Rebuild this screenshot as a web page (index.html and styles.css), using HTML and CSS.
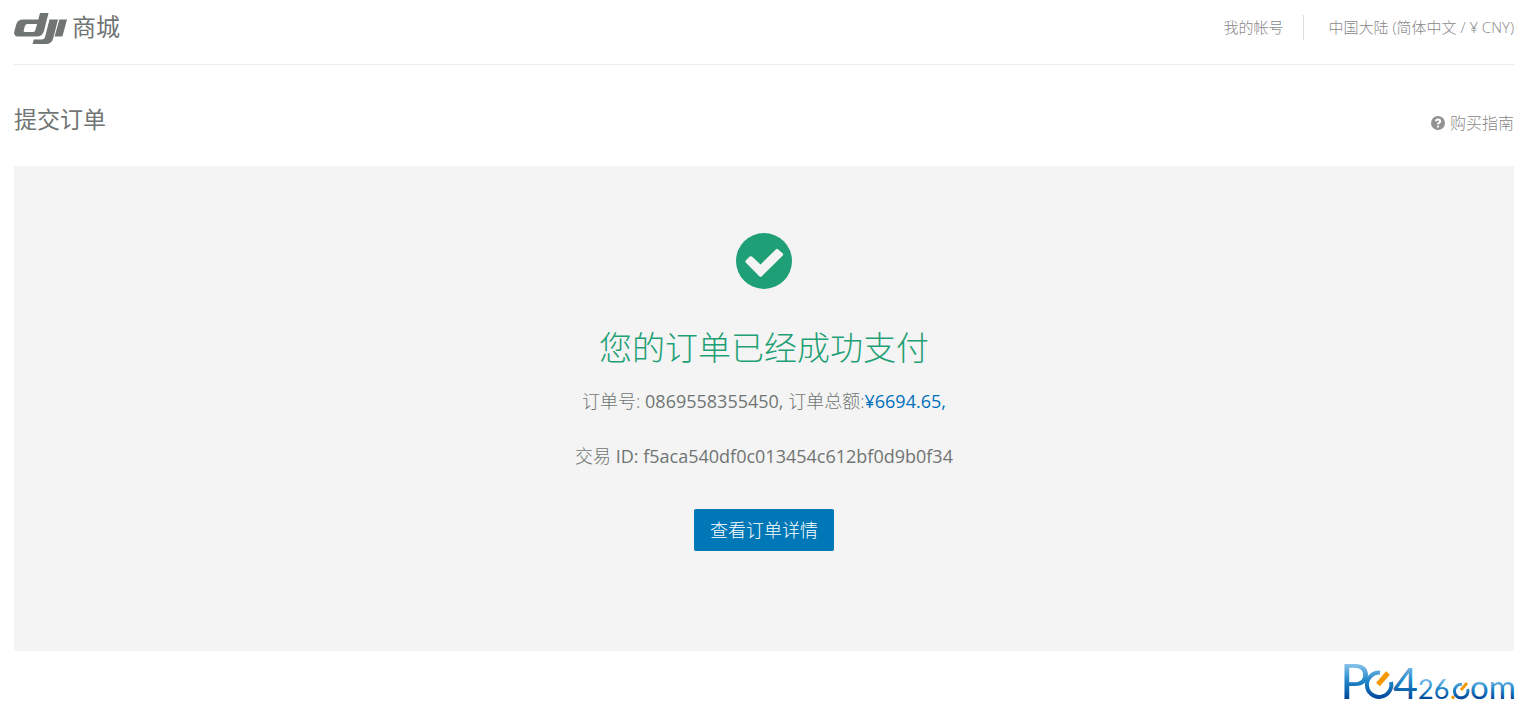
FILE: index.html
```html
<!DOCTYPE html>
<html lang="zh-CN">
<head>
<meta charset="utf-8">
<title>提交订单 - DJI 商城</title>
<meta name="viewport" content="width=device-width, initial-scale=1">
<link rel="stylesheet" href="styles.css">
</head>
<body>
<header class="topbar">
  <a class="brand" href="#">
    <svg class="brand-mark" viewBox="0 0 54 32" role="img" aria-label="DJI">
      <path fill-rule="evenodd" d="M26 0H34.500L30 18Q28.500 23.500 22.500 23.500H5Q-1 23.500 .4 18L2.400 11Q3.800 6.500 9 6.500H24.300ZM23.100 11H13.500Q11.500 11 11 12.800L9.700 17.500Q9.300 19 11 19H19Q20.700 19 21.200 17.500Z"/>
      <path d="M35.500 6.500H44L39.300 25Q37.800 31 31.800 31H18.500L19.800 26.500H27.800Q30.300 26.500 30.900 24.500Z"/>
      <path d="M45.300 6.500H53L48.400 23.500H40.600Z"/>
    </svg>
    <span class="brand-name">商城</span>
  </a>
  <nav class="topnav">
    <a class="topnav-link" href="#">我的帐号</a>
    <a class="topnav-link topnav-region" href="#">中国大陆 (简体中文 / ¥ CNY)</a>
  </nav>
</header>
<main>
  <div class="page-head">
    <h1 class="page-title">提交订单</h1>
    <a class="guide" href="#">
      <svg class="guide-icon" viewBox="0 0 14 14" aria-hidden="true">
        <circle class="guide-disc" cx="7" cy="7" r="7"/>
        <path class="guide-hook" d="M4.800 5.200Q5.200 3.500 7 3.500Q9.200 3.500 9.200 5.200Q9.200 6.300 8 6.900Q7 7.400 7 8.600"/>
        <path class="guide-dot" d="M6 9.700H8V11.500H6Z"/>
      </svg>
      <span>购买指南</span>
    </a>
  </div>
  <section class="result">
    <svg class="result-icon" viewBox="0 0 56 56" aria-hidden="true">
      <circle class="result-disc" cx="28" cy="28" r="28"/>
      <path class="result-tick" d="M9.700 27.500Q9 28.500 9.700 29.500L23.500 43.600Q24.500 44.500 25.500 43.600L46.800 22.500Q47.600 21.500 46.800 20.500L42 16.200Q41 15.400 40 16.200L24.500 31.500L16 23.600Q14.800 22.700 13.700 23.600Z"/>
    </svg>
    <h2 class="result-title">您的订单已经成功支付</h2>
    <p class="result-line">订单号: <span class="value">0869558355450,</span> 订单总额:<span class="value amount">¥6694.65,</span></p>
    <p class="result-line">交易 <span class="value">ID: f5aca540df0c013454c612bf0d9b0f34</span></p>
    <button class="detail-button" type="button">查看订单详情</button>
  </section>
</main>
<footer class="site-foot">
  <svg class="site-mark" viewBox="-6 -12 180 60" role="img" aria-label="PC426.com">
    <defs>
      <linearGradient id="tall" gradientUnits="userSpaceOnUse" x1="0" y1="0" x2="0" y2="36">
        <stop offset="0" stop-color="#8cc6ec"/><stop offset=".5" stop-color="#2086c8"/><stop offset="1" stop-color="#00469a"/>
      </linearGradient>
      <linearGradient id="small" gradientUnits="userSpaceOnUse" x1="0" y1="16" x2="0" y2="36">
        <stop offset="0" stop-color="#7ebfe8"/><stop offset=".5" stop-color="#2086c8"/><stop offset="1" stop-color="#00469a"/>
      </linearGradient>
    </defs>
    <text class="mark-initial" x="-4" y="36">P</text>
    <text class="mark-four" x="49" y="36">4</text>
    <text class="mark-small" x="74" y="36">26</text>
    <text class="mark-dot" x="106" y="36">.</text>
    <text class="mark-end" x="126" y="36">om</text>
    <path class="ring ring-large" d="M36 9.600A12.200 12.200 0 1 0 47 19"/>
    <path class="needle needle-large" d="M34 21.500L44 10"/>
    <path class="ring ring-small" d="M118 21.300A6.800 6.800 0 1 0 123.700 26"/>
    <path class="needle needle-small" d="M117 27L123 20"/>
  </svg>
</footer>
</body>
</html>
```
FILE: styles.css
```css
* {
  box-sizing: border-box;
}

body {
  margin: 0;
  padding: 0 20px 0 14px;
  background: #fff;
  color: #707473;
  font-family: "Open Sans", "Noto Sans CJK SC", sans-serif;
  font-weight: 400;
}

a {
  color: inherit;
  text-decoration: none;
}

h1,
h2,
p {
  margin: 0;
  font-weight: inherit;
}

.topbar {
  display: flex;
  justify-content: space-between;
  height: 65px;
  border-bottom: 1px solid #eee;
}

.brand {
  display: flex;
  align-items: flex-start;
  gap: 4px;
  padding-top: 13px;
}

.brand-mark {
  width: 54px;
  height: 32px;
  fill: #707473;
}

.brand-name {
  font-size: 24px;
  line-height: 28px;
}

.topnav {
  display: flex;
  align-items: flex-start;
  padding-top: 15px;
  color: #888;
  font-size: 15px;
  font-weight: 300;
  line-height: 25px;
}

.topnav-region {
  margin-left: 19px;
  padding-left: 25px;
  border-left: 1px solid #ddd;
}

.page-head {
  display: flex;
  justify-content: space-between;
  align-items: flex-start;
  padding: 37px 0 30px;
}

.page-title {
  font-size: 23px;
  line-height: 34px;
}

.guide {
  display: flex;
  align-items: center;
  gap: 5px;
  padding-top: 8px;
  color: #888;
  font-size: 16px;
  font-weight: 300;
  line-height: 26px;
}

.guide-icon {
  width: 14px;
  height: 14px;
}

.guide-disc {
  fill: #929292;
}

.guide-hook {
  fill: none;
  stroke: #fff;
  stroke-width: 2;
}

.guide-dot {
  fill: #fff;
}

.result {
  display: flex;
  flex-direction: column;
  align-items: center;
  padding: 67px 20px 100px;
  background: #f4f4f4;
  text-align: center;
}

.result-icon {
  width: 56px;
  height: 56px;
}

.result-disc {
  fill: #1f9f75;
}

.result-tick {
  fill: #f4f4f4;
}

.result-title {
  margin: 35px 0 17px;
  color: #1f9f75;
  font-size: 33px;
  font-weight: 300;
  line-height: 48px;
}

.result-line {
  margin-bottom: 30px;
  font-size: 18px;
  font-weight: 300;
  line-height: 25px;
}

.value {
  font-weight: 400;
}

.amount {
  color: #0070bc;
}

.detail-button {
  margin-top: 10px;
  padding: 8px 16px;
  border: 0;
  border-radius: 2px;
  background: #0077b6;
  color: #fff;
  font: inherit;
  font-size: 18px;
  font-weight: 300;
  line-height: 26px;
}

.site-foot {
  display: flex;
  justify-content: flex-end;
  margin-right: -4px;
}

.site-mark {
  width: 180px;
  height: 60px;
  font-family: Lato, sans-serif;
}

.mark-initial {
  fill: url(#tall);
  font-size: 49px;
}

.mark-four {
  fill: url(#tall);
  font-size: 43px;
}

.mark-small {
  fill: url(#small);
  font-size: 27px;
}

.mark-dot {
  fill: #f39800;
  font-size: 27px;
}

.mark-end {
  fill: url(#small);
  font-size: 33px;
}

.ring {
  fill: none;
}

.ring-large {
  stroke: url(#tall);
  stroke-width: 4;
}

.ring-small {
  stroke: url(#small);
  stroke-width: 3;
}

.needle {
  fill: none;
  stroke: #f39800;
}

.needle-large {
  stroke-width: 5;
}

.needle-small {
  stroke-width: 3;
}
```
